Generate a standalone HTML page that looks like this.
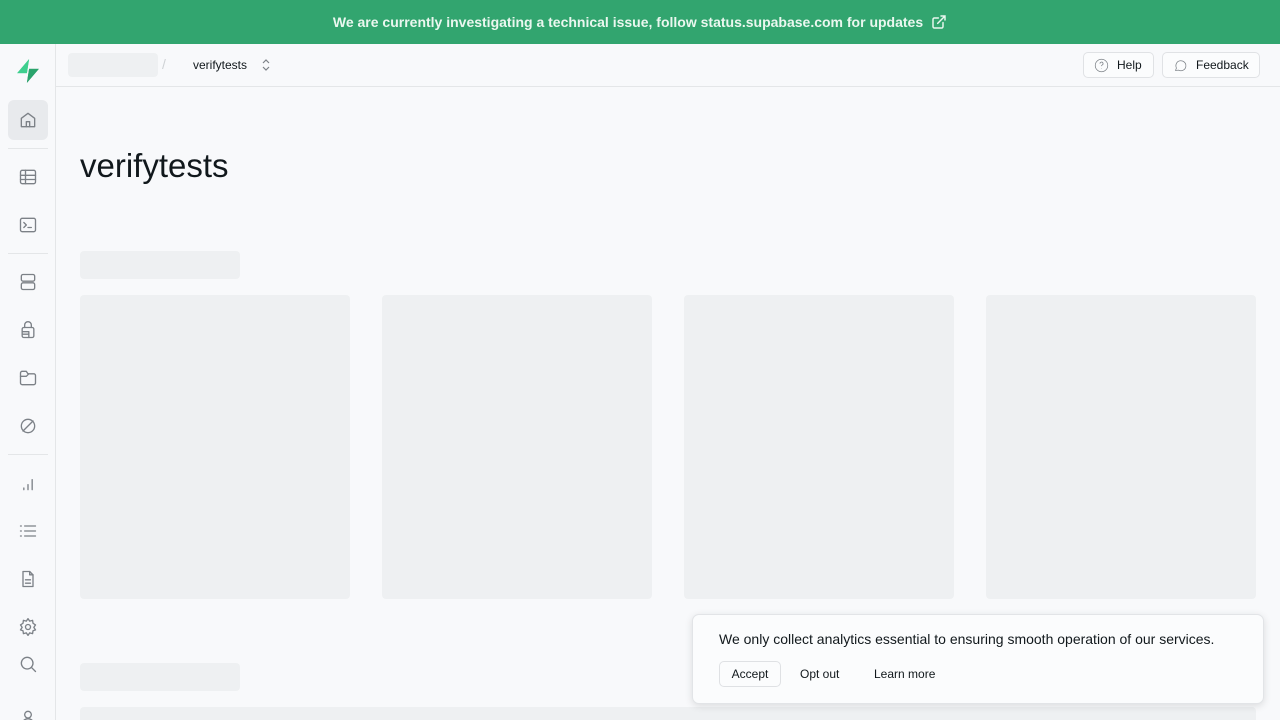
<!DOCTYPE html>
<html><head><meta charset="utf-8"><style>
*{box-sizing:border-box;margin:0;padding:0}
html,body{width:1280px;height:720px;overflow:hidden}
body{background:#f8f9fb;font-family:"Liberation Sans",sans-serif;color:#11181c;position:relative}
.banner{position:absolute;top:0;left:0;width:1280px;height:44px;background:#32a56f;color:#eaf7ef;font-size:14px;font-weight:bold;display:flex;align-items:center;justify-content:center;gap:8px}
.side{position:absolute;top:44px;left:0;width:56px;height:676px;border-right:1px solid #e4e6e8;background:#f8f9fb}
.ic{position:absolute;left:8px;width:40px;height:40px;display:flex;align-items:center;justify-content:center}
.ic svg{width:20px;height:20px;flex:none;fill:none;stroke:#7c8187;stroke-width:1.6;stroke-linecap:round;stroke-linejoin:round}
.sep{position:absolute;left:8px;width:40px;height:1px;background:#e4e6e8}
.top{position:absolute;top:44px;left:56px;width:1224px;height:43px;border-bottom:1px solid #e4e6e8}
.sk{background:#eef0f2;border-radius:4px;position:absolute}
.btn{position:absolute;top:8px;height:26px;border:1px solid #e0e2e5;border-radius:5px;background:#fbfcfd;font-size:12px;display:flex;align-items:center;gap:8px;padding:0 10px}
.btn svg{width:15px;height:15px;flex:none;fill:none;stroke:#7c8187;stroke-width:1.2}
h1{position:absolute;left:80px;top:147px;font-size:33px;font-weight:normal;letter-spacing:0px}
.cookie{position:absolute;left:692px;top:614px;width:572px;height:90px;background:#fbfcfd;border:1px solid #e2e4e7;border-radius:7px;box-shadow:0 2px 8px rgba(0,0,0,.12);font-size:14px}
</style></head><body>
<div class="banner">We are currently investigating a technical issue, follow status.supabase.com for updates
<svg width="16" height="16" viewBox="0 0 24 24" fill="none" stroke="#eaf7ef" stroke-width="2.2" stroke-linecap="round"><path d="M15 3h6v6M10 14L21 3M18 13v6a2 2 0 0 1-2 2H5a2 2 0 0 1-2-2V8a2 2 0 0 1 2-2h6"/></svg></div>
<div class="side">
<svg style="position:absolute;left:15px;top:14px" width="26" height="26" viewBox="0 0 24 24"><path d="M13 1L2 14h9z" fill="#3ecf8e"/><path d="M11 23l11-13h-9z" fill="#249361"/><path d="M2 14h9l2-13z" fill="#3ecf8e"/><path d="M22 10h-9l-2 13z" fill="#2aa46c"/></svg>
<div class="ic" style="top:56px;background:#e8eaed;border-radius:6px"><svg viewBox="0 0 24 24"><path d="M4 10l8-6 8 6v10H4z"/><path d="M10 20v-6h4v6"/></svg></div>
<div class="sep" style="top:104px"></div>
<div class="ic" style="top:113px"><svg viewBox="0 0 24 24"><rect x="3" y="4" width="18" height="16" rx="2"/><path d="M3 10h18M3 15h18M9 4v16"/></svg></div>
<div class="ic" style="top:161px"><svg viewBox="0 0 24 24"><rect x="3" y="4" width="18" height="16" rx="2"/><path d="M7 9l3 3-3 3M12 15h4"/></svg></div>
<div class="sep" style="top:209px"></div>
<div class="ic" style="top:218px"><svg viewBox="0 0 24 24"><rect x="4" y="3" width="16" height="8" rx="2"/><rect x="4" y="13" width="16" height="8" rx="2"/></svg></div>
<div class="ic" style="top:266px"><svg viewBox="0 0 24 24"><path d="M8 9V6a4 4 0 0 1 8 0v3"/><rect x="5" y="9" width="14" height="12" rx="2"/><path d="M5 14h8v7M5 17h8"/></svg></div>
<div class="ic" style="top:314px"><svg viewBox="0 0 24 24"><path d="M3 8V6a2 2 0 0 1 2-2h5l2 3h7a2 2 0 0 1 2 2v9a2 2 0 0 1-2 2H5a2 2 0 0 1-2-2z"/><path d="M3 10h7l3-3"/></svg></div>
<div class="ic" style="top:362px"><svg viewBox="0 0 24 24"><circle cx="12" cy="12" r="8"/><path d="M6 18L18 6"/></svg></div>
<div class="sep" style="top:410px"></div>
<div class="ic" style="top:419px"><svg viewBox="0 0 24 24"><path d="M7 20v-2M12 20v-6M17 20V8"/></svg></div>
<div class="ic" style="top:467px"><svg viewBox="0 0 24 24"><path d="M8 6h13M8 12h13M8 18h13M3 6h1M3 12h1M3 18h1"/></svg></div>
<div class="ic" style="top:515px"><svg viewBox="0 0 24 24"><path d="M14 3H6v18h12V7z"/><path d="M14 3v4h4M9 13h6M9 17h6"/></svg></div>
<div class="ic" style="top:563px"><svg viewBox="0 0 24 24"><circle cx="12" cy="12" r="3"/><path d="M12 2l2 3 3.5-1 .5 3.5 3 2-2 3 2 3-3 1-.5 3.5-3.5-1-2 3-2-3-3.5 1-.5-3.5-3-1 2-3-2-3 3-2 .5-3.5 3.5 1z"/></svg></div>
<div class="ic" style="top:600px"><svg viewBox="0 0 24 24"><circle cx="11" cy="11" r="7"/><path d="M16 16l5 5"/></svg></div>
<div class="ic" style="top:654px"><svg viewBox="0 0 24 24"><circle cx="12" cy="8" r="4"/><path d="M4 21a8 8 0 0 1 16 0"/></svg></div>
</div>
<div class="top">
<div class="sk" style="left:12px;top:9px;width:90px;height:24px"></div>
<span style="position:absolute;left:106px;top:12px;color:#cfd2d5;font-size:14px">/</span>
<span style="position:absolute;left:137px;top:14px;font-size:12px">verifytests</span>
<svg style="position:absolute;left:204px;top:14px" width="12" height="14" viewBox="0 0 12 14" fill="none" stroke="#7c8187" stroke-width="1.2"><path d="M3 5l3-3 3 3M3 9l3 3 3-3"/></svg>
<div class="btn" style="left:1027px;width:71px"><svg viewBox="0 0 24 24"><circle cx="12" cy="12" r="10"/><path d="M9.5 9a2.5 2.5 0 1 1 3.5 2.3c-.7.3-1 .9-1 1.7M12 17v.5"/></svg>Help</div>
<div class="btn" style="left:1106px;width:98px"><svg viewBox="0 0 24 24"><path d="M4 20l1.5-4A8 8 0 1 1 9 19.5z"/></svg>Feedback</div>
</div>
<h1>verifytests</h1>
<div class="sk" style="left:80px;top:251px;width:160px;height:28px"></div>
<div class="sk" style="left:80px;top:295px;width:270px;height:304px"></div>
<div class="sk" style="left:382px;top:295px;width:270px;height:304px"></div>
<div class="sk" style="left:684px;top:295px;width:270px;height:304px"></div>
<div class="sk" style="left:986px;top:295px;width:270px;height:304px"></div>
<div class="sk" style="left:80px;top:663px;width:160px;height:28px"></div>
<div class="sk" style="left:80px;top:707px;width:1176px;height:13px;border-radius:4px 4px 0 0"></div>
<div class="cookie">
<div style="position:absolute;left:26px;top:16px">We only collect analytics essential to ensuring smooth operation of our services.</div>
<div style="position:absolute;left:26px;top:46px;width:62px;height:26px;border:1px solid #dfe1e4;border-radius:5px;font-size:12px;display:flex;align-items:center;justify-content:center;background:#fbfcfd">Accept</div>
<div style="position:absolute;left:107px;top:52px;font-size:12px">Opt out</div>
<div style="position:absolute;left:181px;top:52px;font-size:12px">Learn more</div>
</div>
</body></html>
